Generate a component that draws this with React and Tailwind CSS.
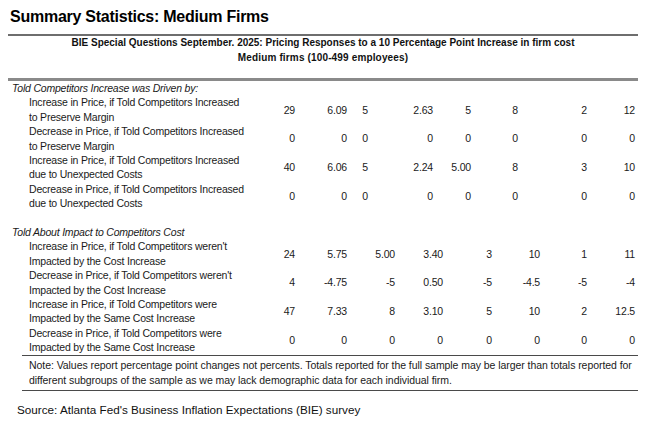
import React from 'react';

const topRows = [
  {
    label: ['Increase in Price, if Told Competitors Increased', 'to Preserve Margin'],
    values: ['29', '6.09', '5', '2.63', '5', '8', '2', '12'],
  },
  {
    label: ['Decrease in Price, if Told Competitors Increased', 'to Preserve Margin'],
    values: ['0', '0', '0', '0', '0', '0', '0', '0'],
  },
  {
    label: ['Increase in Price, if Told Competitors Increased', 'due to Unexpected Costs'],
    values: ['40', '6.06', '5', '2.24', '5.00', '8', '3', '10'],
  },
  {
    label: ['Decrease in Price, if Told Competitors Increased', 'due to Unexpected Costs'],
    values: ['0', '0', '0', '0', '0', '0', '0', '0'],
  },
];

const bottomRows = [
  {
    label: ["Increase in Price, if Told Competitors weren't", 'Impacted by the Cost Increase'],
    values: ['24', '5.75', '5.00', '3.40', '3', '10', '1', '11'],
  },
  {
    label: ["Decrease in Price, if Told Competitors weren't", 'Impacted by the Cost Increase'],
    values: ['4', '-4.75', '-5', '0.50', '-5', '-4.5', '-5', '-4'],
  },
  {
    label: ['Increase in Price, if Told Competitors were', 'Impacted by the Same Cost Increase'],
    values: ['47', '7.33', '8', '3.10', '5', '10', '2', '12.5'],
  },
  {
    label: ['Decrease in Price, if Told Competitors were', 'Impacted by the Same Cost Increase'],
    values: ['0', '0', '0', '0', '0', '0', '0', '0'],
  },
];

function StatRow({ row, cols }) {
  return (
    <div className={`grid ${cols} items-center`}>
      <div className="pl-[21px]">
        <div>{row.label[0]}</div>
        <div>{row.label[1]}</div>
      </div>
      {row.values.map((v, i) => (
        <div key={i} className="text-right">
          {v}
        </div>
      ))}
    </div>
  );
}

export default function App() {
  return (
    <div className="w-[649px] h-[422px] bg-white text-[#1a1a1a] font-['Liberation_Sans',Arial,sans-serif] overflow-hidden">
      <h1 className="pl-[10px] pt-[8px] text-[16px] leading-[18px] font-bold tracking-[-0.25px] text-black">
        Summary Statistics: Medium Firms
      </h1>

      <div className="mt-[8px] ml-[8px] w-[630px]">
        <div className="h-[2px] bg-[#6e6e6e]" />

        <div className="pb-[13px] text-center text-[10px] leading-[14.5px] font-bold text-[#111]">
          <div>
            BIE Special Questions September. 2025: Pricing Responses to a 10 Percentage Point Increase in firm cost
          </div>
          <div className="tracking-[0.15px]">Medium firms (100-499 employees)</div>
        </div>

        <div className="h-[3px] bg-[#8a8a8a]" />

        <div className="text-[10.5px] leading-[14.4px] tracking-[-0.2px]">
          <div className="pl-[4px] italic">Told Competitors Increase was Driven by:</div>
          {topRows.map((row, i) => (
            <StatRow
              key={i}
              row={row}
              cols="grid-cols-[255px_32px_52px_21px_65px_38px_47px_69px_48px]"
            />
          ))}

          <div className="h-[14.4px]" />

          <div className="pl-[4px] italic">Told About Impact to Competitors Cost</div>
          {bottomRows.map((row, i) => (
            <StatRow
              key={i}
              row={row}
              cols="grid-cols-[255px_32px_52px_48px_48px_49px_48px_47px_48px]"
            />
          ))}

          <div className="ml-[14px] border-t-[1.5px] border-b-[1.5px] border-[#4a4a4a] pl-[7px] pt-[2px] pb-[2px] leading-[15px] tracking-[-0.06px]">
            <div>
              Note: Values report percentage point changes not percents. Totals reported for the full sample may be larger than totals reported for
            </div>
            <div>
              different subgroups of the sample as we may lack demographic data for each individual firm.
            </div>
          </div>
        </div>
      </div>

      <p className="mt-[12px] pl-[17px] text-[11.7px] leading-[14px] text-[#111]">
        Source: Atlanta Fed&apos;s Business Inflation Expectations (BIE) survey
      </p>
    </div>
  );
}
